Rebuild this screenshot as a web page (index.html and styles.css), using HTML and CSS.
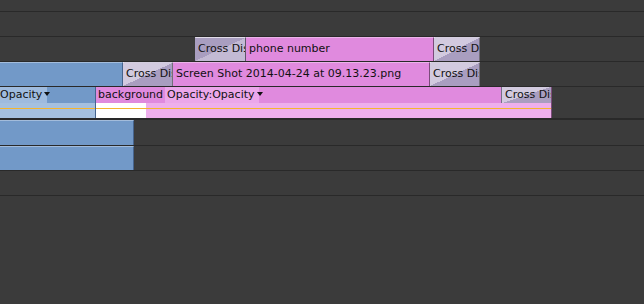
FILE: index.html
```html
<!DOCTYPE html>
<html lang="en">
<head>
    <meta charset="UTF-8">
    <title>Timeline</title>
    <link rel="stylesheet" href="styles.css">
</head>
<body>
    <div class="timeline">
        <div class="track track-top"></div>
        <div class="track"></div>

        <div class="track">
            <div class="lead lead-195"></div>
            <div class="clip trans dark" style="width:51px"><span>Cross Dissolve</span></div>
            <div class="clip pink" style="width:188px"><span>phone number</span></div>
            <div class="clip trans" style="width:46px"><span>Cross Dissolve</span></div>
        </div>

        <div class="track">
            <div class="clip blue" style="width:123px"></div>
            <div class="clip trans" style="width:50px"><span>Cross Dissolve</span></div>
            <div class="clip pink" style="width:257px"><span>Screen Shot 2014-04-24 at 09.13.23.png</span></div>
            <div class="clip trans" style="width:50px"><span>Cross Dissolve</span></div>
        </div>

        <div class="track track-open">
            <div class="clip blue open" style="width:96px">
                <div class="clip-head">
                    <span class="param">Opacity<i class="caret"></i></span>
                </div>
                <div class="clip-keys"><div class="level"></div></div>
            </div>
            <div class="clip pink open" style="width:456px">
                <div class="clip-head">
                    <span class="name">background</span>
                    <span class="param">Opacity:Opacity<i class="caret"></i></span>
                    <span class="trans trans-small">Cross Dissolve</span>
                </div>
                <div class="clip-keys">
                    <div class="blank"></div>
                    <div class="level"></div>
                </div>
            </div>
        </div>

        <div class="track track-25">
            <div class="clip blue" style="width:134px"></div>
        </div>
        <div class="track">
            <div class="clip blue" style="width:134px"></div>
        </div>
        <div class="track"></div>
        <div class="track track-rest"></div>
    </div>
</body>
</html>
```

FILE: styles.css
```css
html, body {
    margin: 0;
    padding: 0;
    background-color: #3b3b3b;
}
.timeline {
    width: 644px;
    height: 304px;
    display: flex;
    flex-direction: column;
    overflow: hidden;
    font-family: "DejaVu Sans", Verdana, sans-serif;
    font-size: 11px;
    color: #111;
}
.track {
    height: 24px;
    flex: none;
    display: flex;
    border-bottom: 1px solid #292929;
}
.track-top {
    height: 11px;
}
.track-open {
    height: 31px;
    border-bottom-width: 2px;
}
.track-25 {
    height: 25px;
}
.track-rest {
    flex: 1;
    border-bottom: none;
}
.lead-195 {
    width: 195px;
    flex: none;
}
.clip {
    box-sizing: border-box;
    height: 100%;
    flex: none;
    border-top: 1px solid rgba(255, 255, 255, 0.35);
    border-right: 1px solid rgba(0, 0, 0, 0.45);
    overflow: hidden;
    white-space: nowrap;
    line-height: 22px;
}
.clip span {
    padding-left: 3px;
}
.blue {
    background-color: #7299c8;
    border-right-color: #46648e;
}
.pink {
    background-color: #e08ade;
}
.trans {
    background: linear-gradient(to bottom right, #d2cadf 50%, #a99ec0 50%);
    border-top-color: rgba(255, 255, 255, 0.5);
}
.trans.dark {
    background: linear-gradient(to bottom right, #a99ec0 50%, #c3bad4 50%);
}
.clip.open {
    display: flex;
    flex-direction: column;
    line-height: 15px;
    border-top: none;
}
.clip-head {
    height: 16px;
    display: flex;
    align-items: stretch;
    flex: none;
}
.clip-head span {
    padding: 0 3px;
}
.clip-head .name {
    padding-left: 2px;
    width: 64px;
}
.blue .param {
    background-color: #9fbbde;
    padding-left: 0;
    width: 44px;
}
.pink .param {
    background-color: #eba7ea;
    padding-left: 2px;
    width: 89px;
}
.caret {
    display: inline-block;
    margin-left: 2px;
    vertical-align: 2px;
    border-left: 3px solid transparent;
    border-right: 3px solid transparent;
    border-top: 4px solid #111;
}
.trans-small {
    box-sizing: border-box;
    margin-left: auto;
    width: 50px;
    height: 16px;
    overflow: hidden;
    border-left: 1px solid rgba(0, 0, 0, 0.3);
}
.clip-head .trans-small {
    padding-left: 3px;
}
.clip-keys {
    flex: 1;
    display: flex;
    position: relative;
}
.blue .clip-keys {
    background-color: #a5c0df;
}
.pink .clip-keys {
    background-color: #eeafec;
}
.blank {
    width: 50px;
    background-color: #ffffff;
    flex: none;
}
.level {
    position: absolute;
    left: 0;
    right: 0;
    top: 5px;
    height: 1px;
    background-color: #f5b52e;
}
```
